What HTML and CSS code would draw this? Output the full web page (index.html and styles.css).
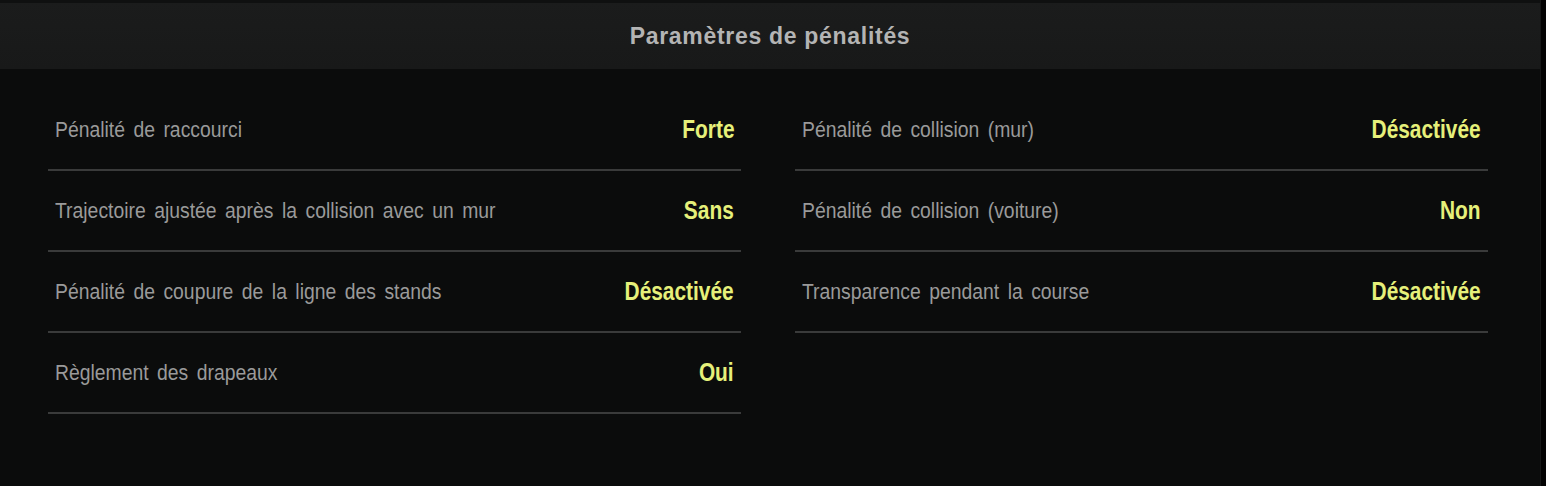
FILE: index.html
```html
<!DOCTYPE html>
<html lang="fr">
<head>
<meta charset="utf-8">
<title>Paramètres de pénalités</title>
<link rel="stylesheet" href="styles.css">
</head>
<body>
<div class="screen">
  <div class="panel">
    <div class="topstrip"></div>
    <header class="header">
      <h1 class="title">Paramètres de pénalités</h1>
    </header>
    <main class="content">
      <div class="column">
        <div class="row"><span class="label">Pénalité de raccourci</span><span class="value">Forte</span></div>
        <div class="row"><span class="label">Trajectoire ajustée après la collision avec un mur</span><span class="value">Sans</span></div>
        <div class="row"><span class="label">Pénalité de coupure de la ligne des stands</span><span class="value">Désactivée</span></div>
        <div class="row"><span class="label">Règlement des drapeaux</span><span class="value">Oui</span></div>
      </div>
      <div class="column">
        <div class="row"><span class="label">Pénalité de collision (mur)</span><span class="value">Désactivée</span></div>
        <div class="row"><span class="label">Pénalité de collision (voiture)</span><span class="value">Non</span></div>
        <div class="row"><span class="label">Transparence pendant la course</span><span class="value">Désactivée</span></div>
      </div>
    </main>
  </div>
  <div class="edge"></div>
</div>
</body>
</html>
```
FILE: styles.css
```css
html, body {
  margin: 0;
  padding: 0;
  background: #040404;
}
.screen {
  display: flex;
  width: 1546px;
  height: 486px;
  overflow: hidden;
}
.panel {
  width: 1540px;
  height: 486px;
  background: #0b0c0c;
  border-right: 1px solid #161717;
  display: flex;
  flex-direction: column;
}
.edge {
  flex: 1;
  background: #030303;
}
.topstrip {
  height: 3px;
  background: #0f1010;
}
.header {
  height: 66px;
  background: linear-gradient(to bottom, #1b1c1c, #181919);
  display: flex;
  align-items: center;
  justify-content: center;
}
.title {
  margin: 0;
  font-family: "Liberation Sans", Arial, sans-serif;
  font-weight: bold;
  font-size: 23px;
  color: #b4b4b4;
  letter-spacing: 0.7px;
}
.content {
  display: grid;
  grid-template-columns: 693px 693px;
  column-gap: 54px;
  padding: 21px 0 0 48px;
}
.column {
  display: flex;
  flex-direction: column;
}
.row {
  height: 79px;
  border-bottom: 2px solid #3a3b3b;
  display: flex;
  align-items: center;
  justify-content: space-between;
  padding: 0 7px;
}
.label {
  display: inline-block;
  font-family: "Liberation Sans", Arial, sans-serif;
  font-size: 22px;
  color: #9a9a9a;
  word-spacing: 3.5px;
  white-space: nowrap;
  transform: scaleX(0.88);
  transform-origin: left center;
}
.value {
  display: inline-block;
  font-family: "Liberation Sans", Arial, sans-serif;
  font-weight: bold;
  font-size: 25px;
  color: #e6f07a;
  white-space: nowrap;
  transform: scaleX(0.835);
  transform-origin: right center;
}
```
